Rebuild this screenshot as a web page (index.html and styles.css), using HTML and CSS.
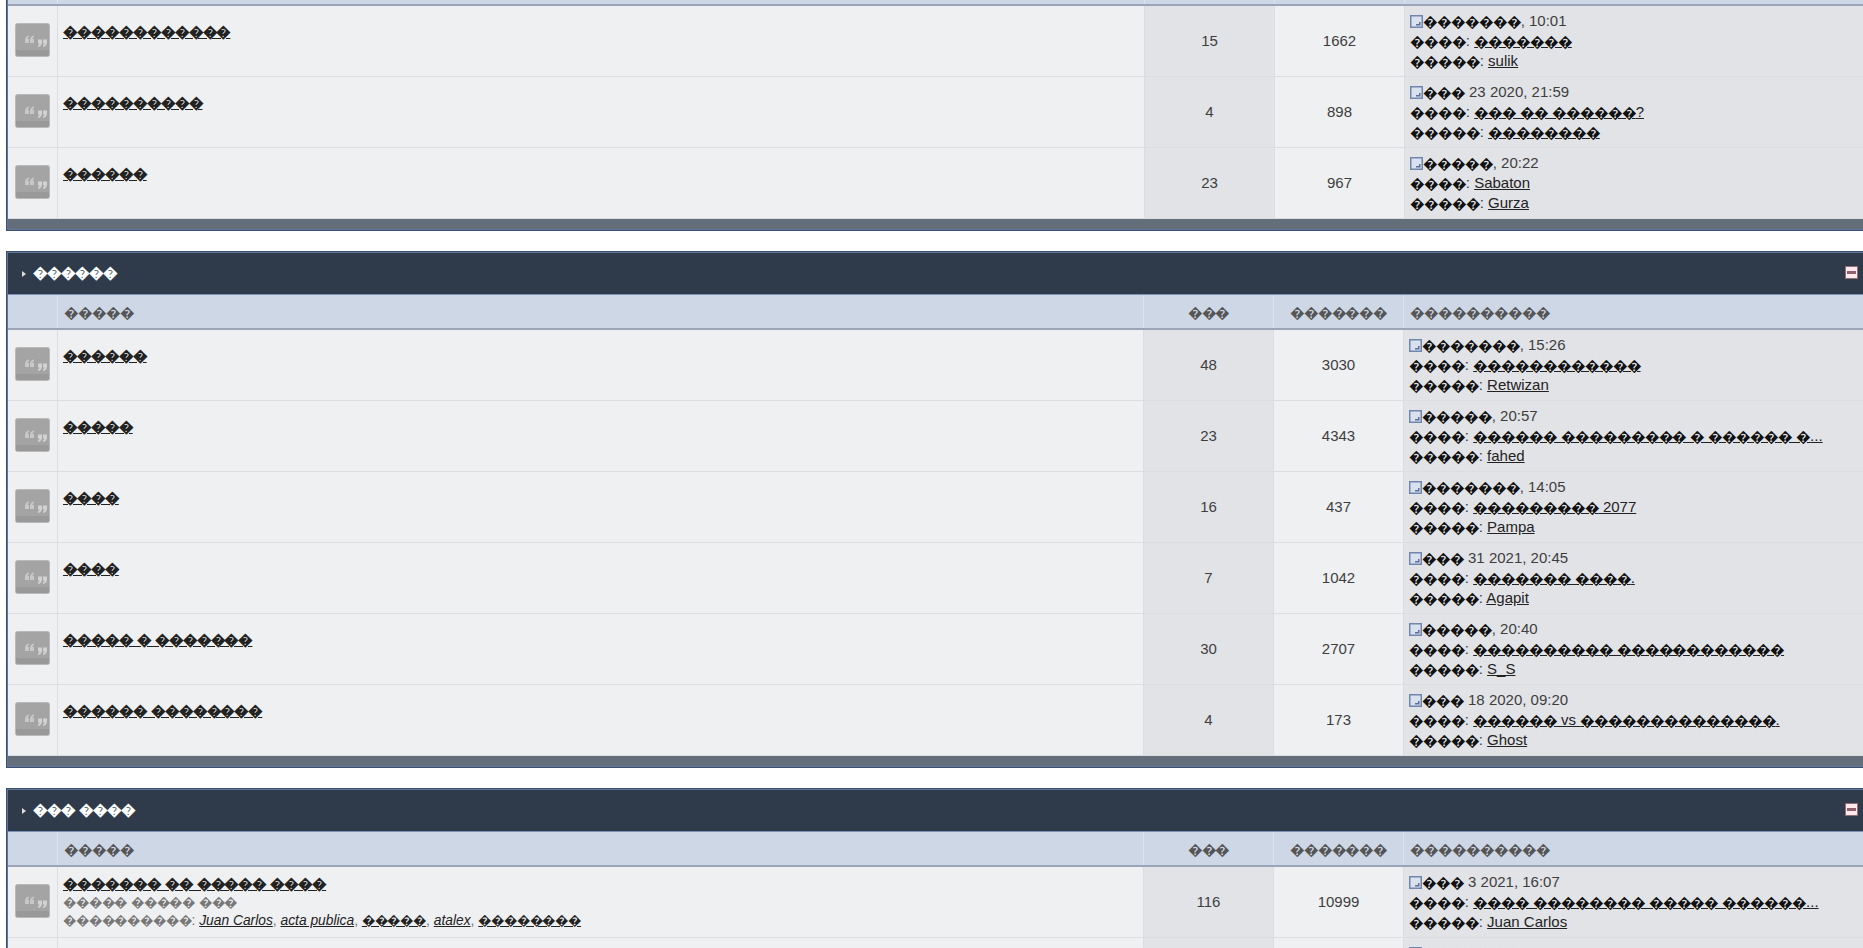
FILE: index.html
```html
<!DOCTYPE html>
<html lang="en">
<head>
    <meta charset="UTF-8">
    <title>Forum</title>
    <link rel="stylesheet" href="styles.css">
</head>
<body>
    <svg class="sprites" width="0" height="0">
        <symbol id="forum-icon" viewBox="0 0 35 34">
            <rect x="0.5" y="0.5" width="34" height="33" rx="2" fill="#a4a4a4" stroke="#b9b9b9"/>
            <path d="M1 27h33v4a2 2 0 0 1-2 2H3a2 2 0 0 1-2-2z" fill="#999999"/>
            <path d="M14 12.500c-2.500.5-4 2.200-4 4.500v3h4v-4h-1.300c0-.8.5-1.600 1.300-1.900zM19 12.500c-2.500.5-4 2.200-4 4.500v3h4v-4h-1.300c0-.8.5-1.600 1.300-1.900z" fill="#c8c8c8"/>
            <path d="M23 24c2.500-.5 4-2.200 4-4.500v-3h-4v4h1.300c0 .8-.5 1.600-1.300 1.900zM28 24c2.500-.5 4-2.200 4-4.500v-3h-4v4h1.300c0 .8-.5 1.600-1.300 1.900z" fill="#d2d2d2"/>
        </symbol>
        <symbol id="post-icon" viewBox="0 0 13 13">
            <rect x="0.750" y="0.750" width="11.500" height="11.500" fill="#dae1ee" stroke="#7186ad" stroke-width="1.500"/>
            <path d="M9 7h1.500v3.500H6V9h3z" fill="#5b6f99"/>
        </symbol>
    </svg>

    <!-- first block, page is scrolled so only the end of its header shows -->
    <section class="block block-cut">
        <div class="row head head-cut cols-a">
            <div></div><div></div><div></div><div></div><div></div>
        </div>
        <div class="row cols-a">
            <div class="c-icon"><svg class="ficon"><use href="#forum-icon"/></svg></div>
            <div class="c-title"><a href="#" class="ftitle"><span class="q">������������</span></a><div class="descr">&nbsp;</div></div>
            <div class="c-num alt">15</div>
            <div class="c-num">1662</div>
            <div class="c-last alt">
                <div><svg class="picon"><use href="#post-icon"/></svg><span class="q">�������</span>, 10:01</div>
                <div><span class="q">����</span>: <a href="#"><span class="q">�������</span></a></div>
                <div><span class="q">�����</span>: <a href="#">sulik</a></div>
            </div>
        </div>
        <div class="row cols-a">
            <div class="c-icon"><svg class="ficon"><use href="#forum-icon"/></svg></div>
            <div class="c-title"><a href="#" class="ftitle"><span class="q">����������</span></a><div class="descr">&nbsp;</div></div>
            <div class="c-num alt">4</div>
            <div class="c-num">898</div>
            <div class="c-last alt">
                <div><svg class="picon"><use href="#post-icon"/></svg><span class="q">���</span> 23 2020, 21:59</div>
                <div><span class="q">����</span>: <a href="#"><span class="q">��� �� ������</span>?</a></div>
                <div><span class="q">�����</span>: <a href="#"><span class="q">��������</span></a></div>
            </div>
        </div>
        <div class="row cols-a">
            <div class="c-icon"><svg class="ficon"><use href="#forum-icon"/></svg></div>
            <div class="c-title"><a href="#" class="ftitle"><span class="q">������</span></a><div class="descr">&nbsp;</div></div>
            <div class="c-num alt">23</div>
            <div class="c-num">967</div>
            <div class="c-last alt">
                <div><svg class="picon"><use href="#post-icon"/></svg><span class="q">�����</span>, 20:22</div>
                <div><span class="q">����</span>: <a href="#">Sabaton</a></div>
                <div><span class="q">�����</span>: <a href="#">Gurza</a></div>
            </div>
        </div>
        <div class="foot"></div>
    </section>

    <section class="block">
        <div class="cat">
            <span class="arrow"></span><span class="q">������</span>
            <span class="collapse"></span>
        </div>
        <div class="row head cols-b">
            <div></div><div class="h-left"><span class="q">�����</span></div><div><span class="q">���</span></div><div><span class="q">�������</span></div><div class="h-left"><span class="q">����������</span></div>
        </div>
        <div class="row cols-b">
            <div class="c-icon"><svg class="ficon"><use href="#forum-icon"/></svg></div>
            <div class="c-title"><a href="#" class="ftitle"><span class="q">������</span></a><div class="descr">&nbsp;</div></div>
            <div class="c-num alt">48</div>
            <div class="c-num">3030</div>
            <div class="c-last alt">
                <div><svg class="picon"><use href="#post-icon"/></svg><span class="q">�������</span>, 15:26</div>
                <div><span class="q">����</span>: <a href="#"><span class="q">������������</span></a></div>
                <div><span class="q">�����</span>: <a href="#">Retwizan</a></div>
            </div>
        </div>
        <div class="row cols-b">
            <div class="c-icon"><svg class="ficon"><use href="#forum-icon"/></svg></div>
            <div class="c-title"><a href="#" class="ftitle"><span class="q">�����</span></a><div class="descr">&nbsp;</div></div>
            <div class="c-num alt">23</div>
            <div class="c-num">4343</div>
            <div class="c-last alt">
                <div><svg class="picon"><use href="#post-icon"/></svg><span class="q">�����</span>, 20:57</div>
                <div><span class="q">����</span>: <a href="#"><span class="q">������ ��������� � ������ �</span>...</a></div>
                <div><span class="q">�����</span>: <a href="#">fahed</a></div>
            </div>
        </div>
        <div class="row cols-b">
            <div class="c-icon"><svg class="ficon"><use href="#forum-icon"/></svg></div>
            <div class="c-title"><a href="#" class="ftitle"><span class="q">����</span></a><div class="descr">&nbsp;</div></div>
            <div class="c-num alt">16</div>
            <div class="c-num">437</div>
            <div class="c-last alt">
                <div><svg class="picon"><use href="#post-icon"/></svg><span class="q">�������</span>, 14:05</div>
                <div><span class="q">����</span>: <a href="#"><span class="q">���������</span> 2077</a></div>
                <div><span class="q">�����</span>: <a href="#">Pampa</a></div>
            </div>
        </div>
        <div class="row cols-b">
            <div class="c-icon"><svg class="ficon"><use href="#forum-icon"/></svg></div>
            <div class="c-title"><a href="#" class="ftitle"><span class="q">����</span></a><div class="descr">&nbsp;</div></div>
            <div class="c-num alt">7</div>
            <div class="c-num">1042</div>
            <div class="c-last alt">
                <div><svg class="picon"><use href="#post-icon"/></svg><span class="q">���</span> 31 2021, 20:45</div>
                <div><span class="q">����</span>: <a href="#"><span class="q">������� ����</span>.</a></div>
                <div><span class="q">�����</span>: <a href="#">Agapit</a></div>
            </div>
        </div>
        <div class="row cols-b">
            <div class="c-icon"><svg class="ficon"><use href="#forum-icon"/></svg></div>
            <div class="c-title"><a href="#" class="ftitle"><span class="q">����� � �������</span></a><div class="descr">&nbsp;</div></div>
            <div class="c-num alt">30</div>
            <div class="c-num">2707</div>
            <div class="c-last alt">
                <div><svg class="picon"><use href="#post-icon"/></svg><span class="q">�����</span>, 20:40</div>
                <div><span class="q">����</span>: <a href="#"><span class="q">���������� ������������</span></a></div>
                <div><span class="q">�����</span>: <a href="#">S_S</a></div>
            </div>
        </div>
        <div class="row cols-b">
            <div class="c-icon"><svg class="ficon"><use href="#forum-icon"/></svg></div>
            <div class="c-title"><a href="#" class="ftitle"><span class="q">������ ��������</span></a><div class="descr">&nbsp;</div></div>
            <div class="c-num alt">4</div>
            <div class="c-num">173</div>
            <div class="c-last alt">
                <div><svg class="picon"><use href="#post-icon"/></svg><span class="q">���</span> 18 2020, 09:20</div>
                <div><span class="q">����</span>: <a href="#"><span class="q">������</span> vs <span class="q">��������������</span>.</a></div>
                <div><span class="q">�����</span>: <a href="#">Ghost</a></div>
            </div>
        </div>
        <div class="foot"></div>
    </section>

    <section class="block">
        <div class="cat">
            <span class="arrow"></span><span class="q">��� ����</span>
            <span class="collapse"></span>
        </div>
        <div class="row head cols-b">
            <div></div><div class="h-left"><span class="q">�����</span></div><div><span class="q">���</span></div><div><span class="q">�������</span></div><div class="h-left"><span class="q">����������</span></div>
        </div>
        <div class="row cols-b">
            <div class="c-icon"><svg class="ficon"><use href="#forum-icon"/></svg></div>
            <div class="c-title">
                <a href="#" class="ftitle"><span class="q">������� �� ����� ����</span></a>
                <div class="descr"><span class="q">����� ����� ���</span></div>
                <div class="descr"><span class="q">����������</span>: <a href="#"><i>Juan Carlos</i></a>, <a href="#"><i>acta publica</i></a>, <a href="#"><span class="q">�����</span></a>, <a href="#"><i>atalex</i></a>, <a href="#"><span class="q">��������</span></a></div>
            </div>
            <div class="c-num alt">116</div>
            <div class="c-num">10999</div>
            <div class="c-last alt">
                <div><svg class="picon"><use href="#post-icon"/></svg><span class="q">���</span> 3 2021, 16:07</div>
                <div><span class="q">����</span>: <a href="#"><span class="q">���� �������� ����� ������</span>...</a></div>
                <div><span class="q">�����</span>: <a href="#">Juan Carlos</a></div>
            </div>
        </div>
        <div class="row cols-b">
            <div class="c-icon"></div>
            <div class="c-title"></div>
            <div class="c-num alt"></div>
            <div class="c-num"></div>
            <div class="c-last alt">
                <div><svg class="picon"><use href="#post-icon"/></svg><span class="q">�������</span>, 15:34</div>
            </div>
        </div>
    </section>
</body>
</html>
```

FILE: styles.css
```css
html, body {
    height: 948px;
    overflow: hidden;
}

body {
    margin: 0;
    padding: 0 0 0 6px;
    background-color: #ffffff;
    color: #3e3e3e;
    font-family: "Liberation Sans", Arial, sans-serif;
    font-size: 15px;
    line-height: 20px;
}

a {
    color: #222222;
}

/* the replacement glyph runs a bit narrower and sits lower than in Liberation */
.q {
    font-size: 14.67px;
    line-height: 1;
    letter-spacing: -1.05px;
    word-spacing: 1px;
    vertical-align: -1px;
}

.sprites {
    display: block;
}

.block {
    width: 1861px;
    border: 1px solid #3d4f6e;
    border-right: none;
    padding: 1px 0 1px 1px;
    background-color: #5f769c;
    margin-bottom: 20px;
}

.block-cut {
    border-top: none;
    padding-top: 0;
}

.cat {
    display: flex;
    align-items: center;
    height: 41px;
    padding: 0 11px 0 14px;
    background-color: #2f3b4a;
    border-bottom: 1px solid #7b93b8;
    color: #ffffff;
    font-weight: bold;
}

.cat .q,
.ftitle .q {
    vertical-align: baseline;
}

.arrow {
    border-left: 4px solid #dddddd;
    border-top: 3px solid transparent;
    border-bottom: 3px solid transparent;
    margin-right: 7px;
}

.collapse {
    box-sizing: border-box;
    width: 13px;
    height: 13px;
    margin: -2px 0 0 auto;
    border: 1px solid #8f6f76;
    background: linear-gradient(#8f5f6a, #8f5f6a) center / 9px 3px no-repeat, #ffe9ec;
}

.row {
    display: grid;
    border-bottom: 1px solid #dcdde0;
    background-color: #eff0f2;
}

.cols-a {
    grid-template-columns: 49px 1087px 130px 130px 1fr;
}

.cols-b {
    grid-template-columns: 49px 1086px 130px 130px 1fr;
}

.row > div {
    border-left: 1px solid #dcdde0;
}

.row > div:first-child {
    border-left: none;
}

.head {
    height: 33px;
    background-color: #cdd7e6;
    border-bottom: 2px solid #9ba5b7;
    color: #555555;
    text-align: center;
    align-items: stretch;
}

.head > div {
    display: flex;
    align-items: center;
    justify-content: center;
    padding-top: 3px;
    border-left-color: #dde3ee;
}

.head > .h-left {
    justify-content: flex-start;
    padding-left: 6px;
}

.head-cut {
    height: 4px;
}

.head-cut > div {
    padding-top: 0;
}

.c-icon {
    display: flex;
    align-items: center;
    justify-content: center;
    padding-bottom: 2px;
}

.ficon {
    display: block;
    width: 35px;
    height: 34px;
}

.c-title {
    align-self: stretch;
    display: flex;
    flex-direction: column;
    justify-content: center;
    align-items: flex-start;
    padding: 0 5px;
    height: 70px;
}

.ftitle {
    font-weight: bold;
}

.descr {
    color: #777777;
    font-size: 13.8px;
    line-height: 18px;
}

.descr .q {
    font-size: 13.5px;
    letter-spacing: -1.15px;
    vertical-align: baseline;
}

.c-num {
    display: flex;
    align-items: center;
    justify-content: center;
}

.alt {
    background-color: #e2e3e7;
}

.c-last {
    padding: 5px 5px;
}

.c-last .q {
    color: #111111;
}

.picon {
    width: 13px;
    height: 13px;
    vertical-align: -2px;
}

.foot {
    height: 10px;
    background-color: #646d7a;
}
```
